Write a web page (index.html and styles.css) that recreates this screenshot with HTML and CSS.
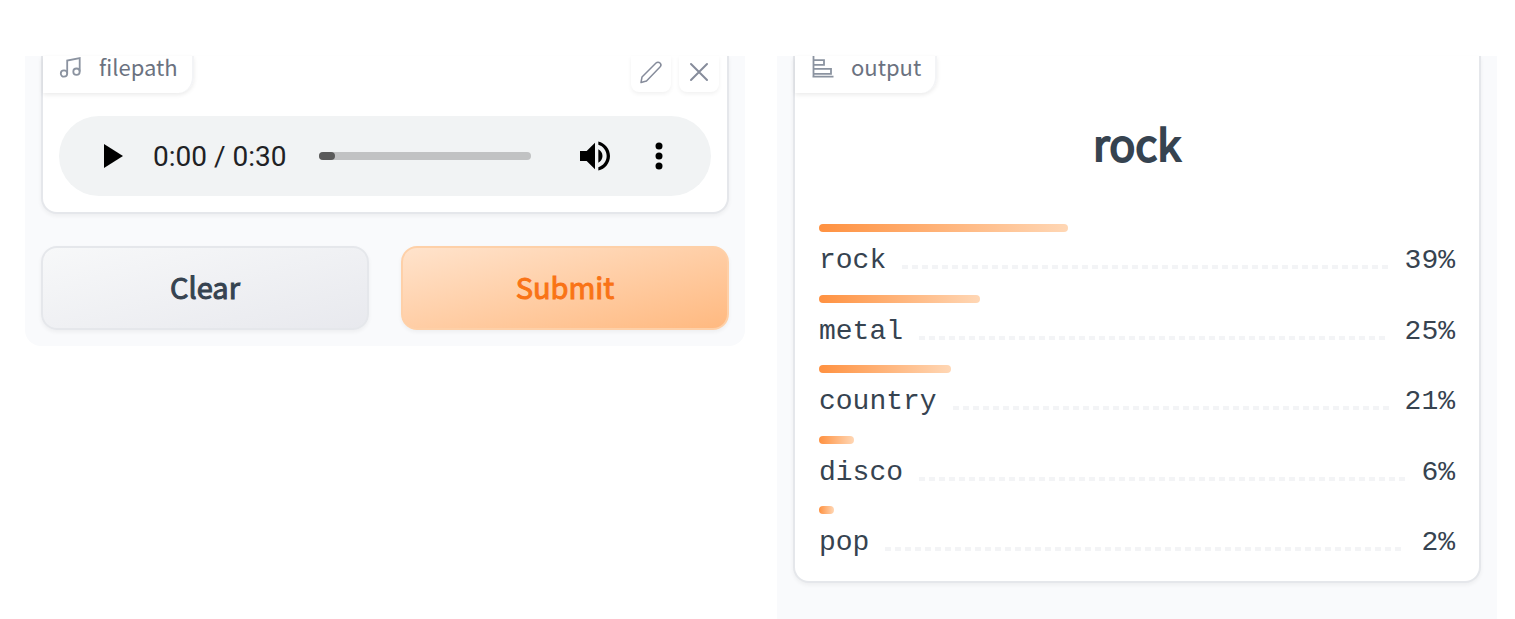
FILE: index.html
```html
<!DOCTYPE html>
<html lang="en">
<head>
<meta charset="utf-8">
<title>Music genre classifier</title>
<link rel="stylesheet" href="styles.css">
</head>
<body>
<main class="page">
  <section class="panel panel-input">
    <div class="card">
      <header class="card-head">
        <div class="tag">
          <svg class="tag-icon" viewBox="0 0 24 24" fill="none" stroke="currentColor" stroke-width="1.800"><circle cx="5" cy="19.500" r="3.200"/><circle cx="17.500" cy="17.700" r="3.200"/><path d="M8.200 19.500V6.500L20.700 4v13.500"/></svg>
          <span>filepath</span>
        </div>
        <div class="tools">
          <button class="tool" type="button" aria-label="Edit"><svg width="24" height="24" viewBox="0 0 24 24" fill="none" stroke="currentColor" stroke-width="1.500" stroke-linejoin="round"><path d="M2 22.500l1-5.500L17 3a2.800 2.800 0 0 1 4 4L7.500 21z"/></svg></button>
          <button class="tool" type="button" aria-label="Remove"><svg width="24" height="24" viewBox="0 0 24 24" fill="none" stroke="currentColor" stroke-width="2" stroke-linecap="round"><path d="M4 4l16 16M20 4L4 20"/></svg></button>
        </div>
      </header>
      <div class="player">
        <button class="player-button" type="button" aria-label="Play"><svg width="40" height="40" viewBox="0 0 40 40"><path d="M13 8v24l19-12z"/></svg></button>
        <span class="time">0:00 / 0:30</span>
        <input class="seek" type="range" min="0" max="30" value="0" aria-label="Position">
        <button class="player-button" type="button" aria-label="Mute"><svg width="40" height="40" viewBox="0 0 24 24"><path d="M3 9v6h4l5 5V4L7 9H3zm13.500 3c0-1.770-1.020-3.290-2.500-4.030v8.050c1.480-.73 2.500-2.250 2.500-4.020zM14 3.230v2.060c2.890.86 5 3.540 5 6.710s-2.110 5.850-5 6.710v2.060c4.010-.91 7-4.490 7-8.770s-2.990-7.860-7-8.770z"/></svg></button>
        <button class="player-button" type="button" aria-label="More options"><svg width="40" height="40" viewBox="0 0 40 40"><circle cx="20" cy="10" r="3.500"/><circle cx="20" cy="20" r="3.500"/><circle cx="20" cy="30" r="3.500"/></svg></button>
      </div>
    </div>
    <div class="actions">
      <button class="action" type="button">Clear</button>
      <button class="action action-primary" type="button">Submit</button>
    </div>
  </section>

  <section class="panel panel-output">
    <div class="card">
      <header class="card-head">
        <div class="tag">
          <svg class="tag-icon" viewBox="0 0 24 24" fill="none" stroke="currentColor" stroke-width="1.800"><path d="M2.500 2v21M1.500 22.700h21M2.500 6.200h10.500v4.600H2.500M2.500 14.800h17.500v5H2.500"/></svg>
          <span>output</span>
        </div>
      </header>
      <h2 class="result">rock</h2>
      <ul class="scores">
        <li class="score"><div class="bar" style="width:39.2%"></div><div class="line"><span>rock</span><i class="dots"></i><span>39%</span></div></li>
        <li class="score"><div class="bar" style="width:25.3%"></div><div class="line"><span>metal</span><i class="dots"></i><span>25%</span></div></li>
        <li class="score"><div class="bar" style="width:20.8%"></div><div class="line"><span>country</span><i class="dots"></i><span>21%</span></div></li>
        <li class="score"><div class="bar" style="width:5.5%"></div><div class="line"><span>disco</span><i class="dots"></i><span>6%</span></div></li>
        <li class="score"><div class="bar" style="width:2.4%"></div><div class="line"><span>pop</span><i class="dots"></i><span>2%</span></div></li>
      </ul>
    </div>
  </section>
</main>
</body>
</html>
```
FILE: styles.css
```css
* {
  box-sizing: border-box;
}

body {
  margin: 0;
  background: #fff;
  color: #364350;
  font-family: "Noto Sans CJK SC", "Noto Sans", sans-serif;
}

button {
  font: inherit;
  cursor: pointer;
}

.page {
  display: flex;
  align-items: flex-start;
  gap: 32px;
  padding: 56px 18px 0 25px;
}

.panel {
  flex: 1;
  min-width: 0;
  padding: 0 16px 16px;
  background: #f9fafc;
}

.panel-input {
  border-radius: 0 0 16px 16px;
}

.panel-output {
  padding-bottom: 36px;
}

.card {
  background: #fff;
  border: 2px solid #e5e7eb;
  border-top: 0;
  border-radius: 0 0 16px 16px;
  box-shadow: 0 2px 4px rgba(0, 0, 0, 0.05);
}

.card-head {
  display: flex;
  justify-content: space-between;
  align-items: flex-start;
}

.tag {
  display: flex;
  align-items: center;
  gap: 16px;
  height: 37px;
  padding: 0 14px 18px 16px;
  border-right: 2px solid #f3f4f6;
  border-radius: 0 0 16px 0;
  box-shadow: 0 2px 4px rgba(0, 0, 0, 0.08);
  color: #6b7280;
  font-size: 22px;
  line-height: 24px;
}

.tag-icon {
  width: 24px;
  height: 24px;
  color: #8b93a0;
}

.tools {
  display: flex;
  gap: 8px;
  padding-right: 8px;
}

.tool {
  display: grid;
  place-items: center;
  width: 40px;
  height: 36px;
  padding: 0 0 4px;
  border: 0;
  border-radius: 0 0 8px 8px;
  background: #fff;
  box-shadow: 0 2px 4px rgba(0, 0, 0, 0.06);
  color: #868c9b;
}

.player {
  display: flex;
  align-items: center;
  height: 80px;
  margin: 23px 16px 16px;
  padding: 0 32px;
  border-radius: 40px;
  background: #f1f3f4;
}

.player-button {
  display: grid;
  place-items: center;
  width: 40px;
  height: 40px;
  padding: 0;
  border: 0;
  background: none;
}

.time {
  margin: 0 33px 0 22px;
  padding-top: 2px;
  color: #202124;
  font: 28px/32px Roboto, sans-serif;
  white-space: nowrap;
}

.seek {
  appearance: none;
  flex: 1;
  min-width: 0;
  height: 8px;
  margin: 0 44px 0 0;
  border-radius: 4px;
  background: #c1c2c3;
}

.seek::-webkit-slider-thumb {
  appearance: none;
  width: 16px;
  height: 8px;
  border-radius: 4px;
  background: #5a5a5a;
}

.player-button:last-child {
  margin: 0 0 0 24px;
}

.actions {
  display: flex;
  gap: 32px;
  margin-top: 32px;
}

.action {
  flex: 1;
  height: 84px;
  padding: 0 0 4px;
  border: 2px solid #e5e7eb;
  border-radius: 16px;
  background: linear-gradient(to bottom right, #f7f8f9, #e8e9ee);
  box-shadow: 0 2px 4px rgba(0, 0, 0, 0.05);
  color: #364350;
  font-size: 29px;
  -webkit-text-stroke: 1px currentColor;
}

.action-primary {
  border-color: #fed0a8;
  background: linear-gradient(to bottom right, #ffe3cc, #ffb980);
  color: #f97316;
}

.result {
  margin: 17px 0 0;
  font-size: 43px;
  font-weight: 400;
  line-height: 64px;
  text-align: center;
  -webkit-text-stroke: 2px currentColor;
}

.scores {
  display: flex;
  flex-direction: column;
  justify-content: space-between;
  min-height: 340px;
  margin: 50px 24px 17px;
  padding: 0;
  list-style: none;
}

.bar {
  height: 8px;
  border-radius: 4px;
  background: linear-gradient(to right, #ff9140, #ffd7b5);
}

.line {
  display: flex;
  align-items: center;
  gap: 16px;
  padding: 9px 0 1px;
  font: 28px/40px "Liberation Mono", monospace;
}

.dots {
  flex: 1;
  height: 4px;
  margin-top: 12px;
  background: repeating-linear-gradient(to right, #f3f4f6 0 6px, transparent 6px 10px);
}
```
